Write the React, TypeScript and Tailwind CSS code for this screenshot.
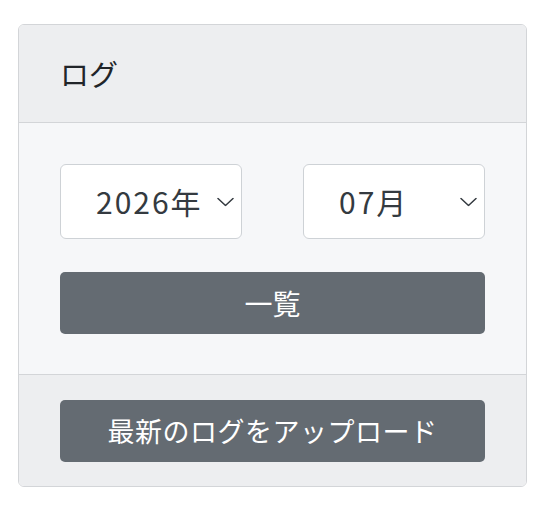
import { useState } from "react";

const years = ["2024", "2025", "2026", "2027"];
const months = ["01", "02", "03", "04", "05", "06", "07", "08", "09", "10", "11", "12"];

function Chevron() {
  return (
    <svg
      className="pointer-events-none absolute right-[8px] top-1/2 h-[9px] w-[17px] -translate-y-1/2"
      viewBox="0 0 17 9"
      fill="none"
    >
      <path d="M1 1l7.5 7L16 1" stroke="#343a40" strokeWidth="1.5" strokeLinecap="round" strokeLinejoin="round" />
    </svg>
  );
}

function Select({ value, options, suffix, onChange }: { value: string; options: string[]; suffix: string; onChange: (v: string) => void }) {
  return (
    <div className="relative w-[182px]">
      <select
        value={value}
        onChange={(e) => onChange(e.target.value)}
        className="h-[75px] w-full appearance-none rounded-[6px] border border-[#ced2d6] bg-white pl-[35px] pr-[30px] text-[30px] tracking-[2px] text-[#343a40] outline-none"
      >
        {options.map((o) => (
          <option key={o} value={o}>
            {o}
            {suffix}
          </option>
        ))}
      </select>
      <Chevron />
    </div>
  );
}

export default function App() {
  const [year, setYear] = useState("2026");
  const [month, setMonth] = useState("07");

  return (
    <div className="min-h-screen bg-white pl-[18px] pr-[25px] pt-[24px] font-['Noto_Sans_CJK_JP','Noto_Sans',sans-serif]">
      <div className="overflow-hidden rounded-[6px] border border-[#d3d5d8]">
        <div className="flex h-[98px] items-center border-b border-[#d3d5d8] bg-[#edeef0] px-[41px]">
          <h2 className="text-[29px] leading-none text-[#212529]">ログ</h2>
        </div>

        <div className="bg-[#f6f7f9] px-[41px] pb-[40px] pt-[41px]">
          <div className="flex justify-between">
            <Select value={year} options={years} suffix="年" onChange={setYear} />
            <Select value={month} options={months} suffix="月" onChange={setMonth} />
          </div>
          <button className="mt-[33px] h-[62px] w-full rounded-[5px] bg-[#646b72] text-[28px] text-white">
            一覧
          </button>
        </div>

        <div className="border-t border-[#d3d5d8] bg-[#edeef0] px-[41px] pb-[24px] pt-[25px]">
          <button className="h-[62px] w-full rounded-[5px] bg-[#646b72] text-[27px] tracking-[0.5px] text-white">
            最新のログをアップロード
          </button>
        </div>
      </div>
    </div>
  );
}
